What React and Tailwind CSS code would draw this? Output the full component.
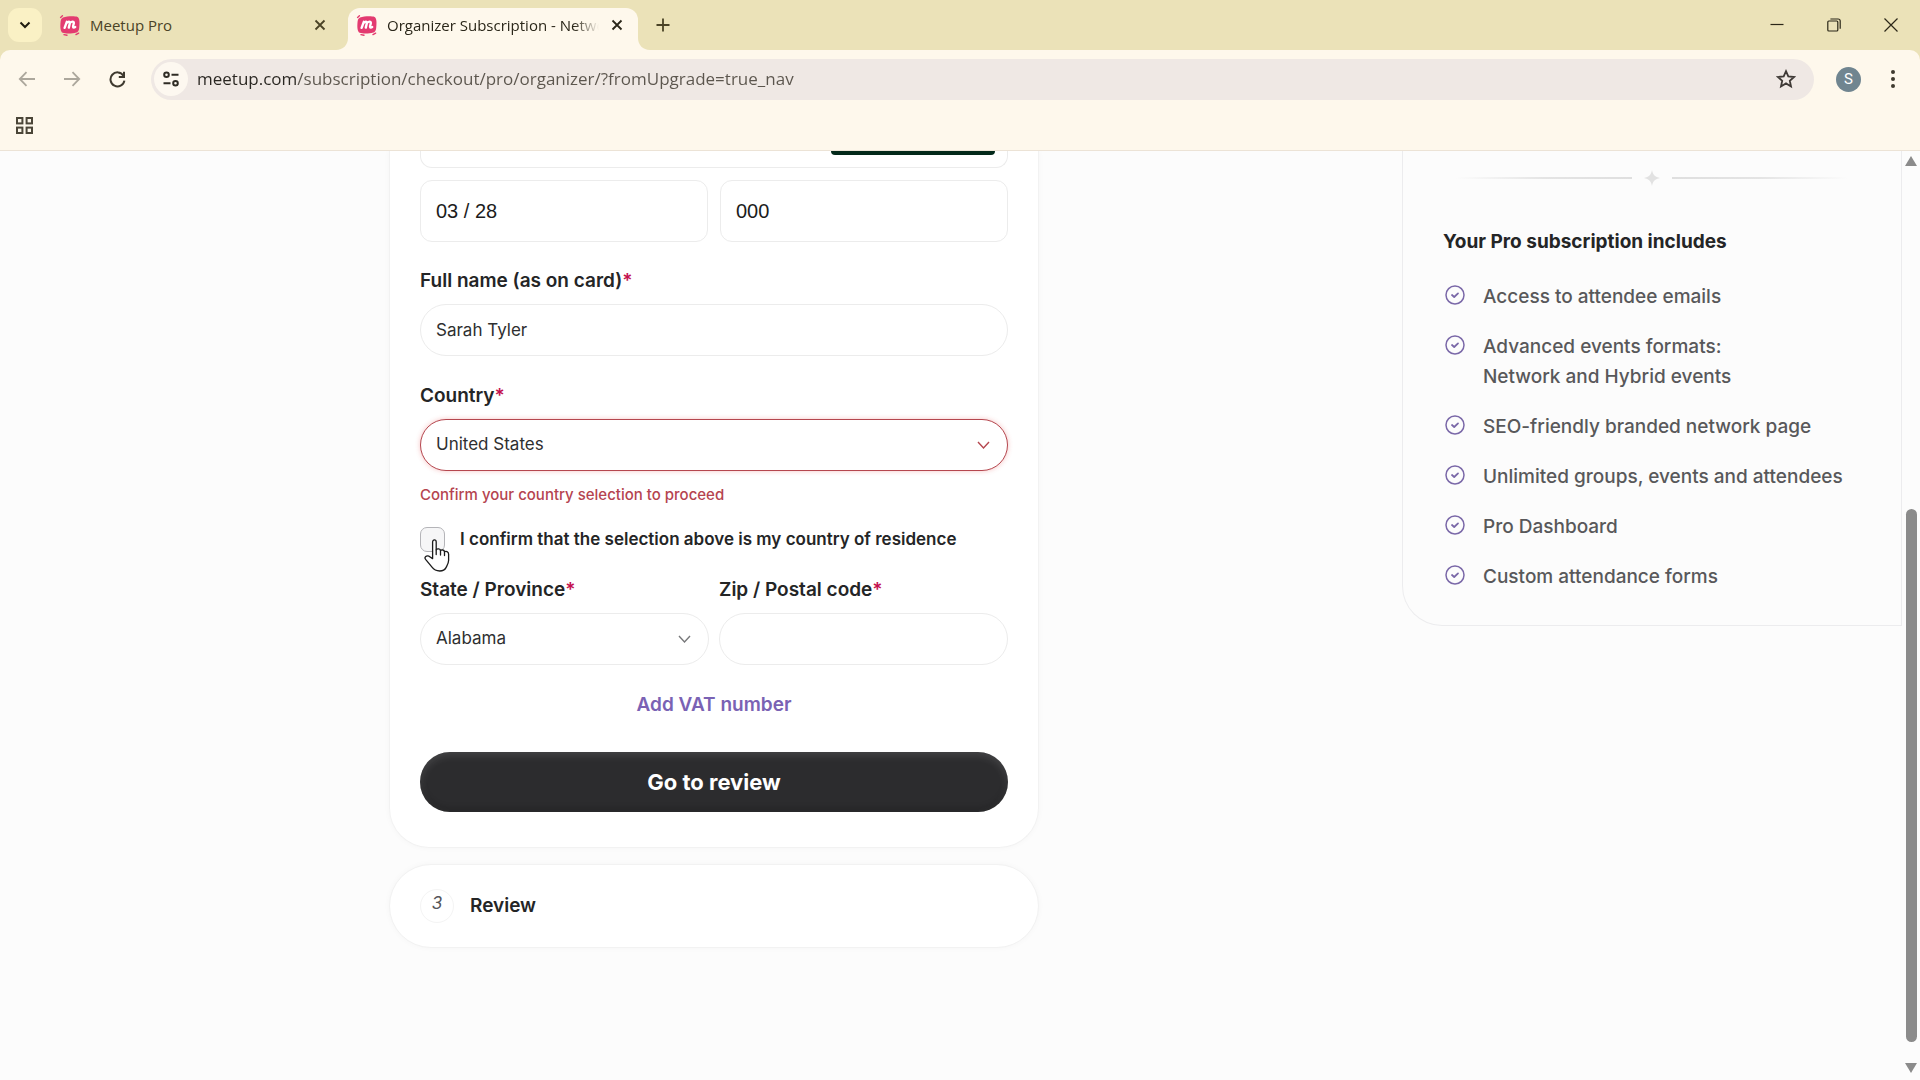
import React, { useState } from 'react';

const includes = [
  ['Access to attendee emails'],
  ['Advanced events formats:', 'Network and Hybrid events'],
  ['SEO-friendly branded network page'],
  ['Unlimited groups, events and attendees'],
  ['Pro Dashboard'],
  ['Custom attendance forms'],
];

const fieldClass =
  'w-full h-[52px] rounded-full border bg-white px-[15px] text-[17px] text-[#2e2f30] outline-none appearance-none';

function Favicon() {
  return (
    <svg width="22" height="22" viewBox="0 0 22 22" className="shrink-0">
      <path
        d="M4 3.4C8 2.4 15 1.8 18.6 3C20.4 4 20.8 8 20.4 11C20.2 15 20 17.6 17.4 18.6C13 19.8 7 20 3.6 18.8C1.4 17.6 1.2 13 1.4 10C1.6 6.6 1.8 4.2 4 3.4Z"
        fill="#e33b70"
      />
      <path d="M1.6 3.4L3.4 1.8M17 20.6L19.6 19.2M5 20.6L8 21.2" stroke="#e33b70" strokeWidth="1.4" strokeLinecap="round" />
      <path
        d="M5.6 13.8L7.8 7.8M7.2 9.6C8.8 7 11.4 7 10.8 9.4L9.8 13.6M10.6 9.6C12.2 7 15.2 7 14.8 9.4C14.4 11 13.4 13.4 14.8 13.6C15.4 13.6 15.8 13.4 16.2 13"
        stroke="#fff"
        strokeWidth="2.4"
        strokeLinecap="round"
        strokeLinejoin="round"
        fill="none"
      />
    </svg>
  );
}

function CloseIcon() {
  return (
    <svg width="12" height="12" viewBox="0 0 12 12" fill="none" stroke="currentColor" strokeWidth="1.8">
      <path d="M1.5 1.5L10.5 10.5M10.5 1.5L1.5 10.5" />
    </svg>
  );
}

function TabStrip() {
  return (
    <div className="flex h-[50px] items-end bg-[#ebe2b8] text-[15px] text-[#4a4326]">
      <button aria-label="Search tabs" className="mb-2 ml-2 flex h-[34px] w-[34px] items-center justify-center rounded-[11px] bg-[#faf1c5] text-[#1f1c10]">
        <svg width="12" height="8" viewBox="0 0 12 8" fill="none" stroke="currentColor" strokeWidth="2">
          <path d="M1.5 1.5L6 6L10.5 1.5" />
        </svg>
      </button>
      <div className="flex h-[50px] w-[306px] items-center pr-[22px] pl-[17px]">
        <Favicon />
        <span className="ml-[9px] flex-1">Meetup Pro</span>
        <button aria-label="Close tab"><CloseIcon /></button>
      </div>
      <div className="relative flex h-[42px] w-[290px] items-center rounded-t-[12px] bg-[#fef8ec] pr-[15px] pb-2 pl-2 text-[#2a2619]">
        <svg className="absolute bottom-0 -left-3" width="12" height="12" viewBox="0 0 12 12" fill="#fef8ec">
          <path d="M12 0V12H0C7 12 12 7 12 0Z" />
        </svg>
        <svg className="absolute -right-3 bottom-0" width="12" height="12" viewBox="0 0 12 12" fill="#fef8ec">
          <path d="M0 0V12H12C5 12 0 7 0 0Z" />
        </svg>
        <Favicon />
        <span className="mr-3 ml-[9px] flex-1 overflow-hidden whitespace-nowrap [mask-image:linear-gradient(to_right,black_88%,transparent)]">
          Organizer Subscription - Network
        </span>
        <button aria-label="Close tab"><CloseIcon /></button>
      </div>
      <button aria-label="New tab" className="mb-[18px] ml-[18px] text-[#4a4326]">
        <svg width="14" height="14" viewBox="0 0 14 14" fill="none" stroke="currentColor" strokeWidth="1.8">
          <path d="M7 0.5V13.5M0.5 7H13.5" />
        </svg>
      </button>
      <div className="mr-[22px] mb-[18px] ml-auto flex items-center gap-[43px] text-[#2b2718]">
        <button aria-label="Minimize">
          <svg width="14" height="14" viewBox="0 0 14 14" stroke="currentColor" strokeWidth="1.2">
            <path d="M0.5 6.5H13.5" />
          </svg>
        </button>
        <button aria-label="Restore">
          <svg width="14" height="14" viewBox="0 0 14 14" fill="none" stroke="currentColor" strokeWidth="1.2">
            <rect x="0.8" y="3" width="10" height="10" rx="1" />
            <path d="M3.4 1H11C12.4 1 13.2 1.8 13.2 3V10.8" />
          </svg>
        </button>
        <button aria-label="Close">
          <svg width="14" height="14" viewBox="0 0 14 14" fill="none" stroke="currentColor" strokeWidth="1.2">
            <path d="M0.5 0.5L13.5 13.5M13.5 0.5L0.5 13.5" />
          </svg>
        </button>
      </div>
    </div>
  );
}

function Toolbar() {
  const [url, setUrl] = useState('meetup.com/subscription/checkout/pro/organizer/?fromUpgrade=true_nav');

  return (
    <div className="bg-[#ebe2b8]">
      <div className="rounded-t-[10px] border-b border-[#ece3d6] bg-[#fef8ec]">
        <div className="flex h-[58px] items-center pr-[21px] pl-[18px]">
          <button aria-label="Back" className="text-[#aca79c]">
            <svg width="18" height="16" viewBox="0 0 18 16" fill="none" stroke="currentColor" strokeWidth="1.8">
              <path d="M17 8H2M8.5 1.2L1.8 8L8.5 14.8" />
            </svg>
          </button>
          <button aria-label="Forward" className="ml-[27px] text-[#aca79c]">
            <svg width="18" height="16" viewBox="0 0 18 16" fill="none" stroke="currentColor" strokeWidth="1.8">
              <path d="M1 8H16M9.5 1.2L16.2 8L9.5 14.8" />
            </svg>
          </button>
          <button aria-label="Reload" className="ml-[28px] text-[#3f3a2f]">
            <svg width="17" height="17" viewBox="0 0 17 17" fill="none" stroke="currentColor" strokeWidth="2">
              <path d="M14.4 4.6A7 7 0 1 0 15.4 9.6" />
              <path d="M15 0.8V6H9.8" />
            </svg>
          </button>
          <div className="ml-[25px] flex h-[41px] flex-1 items-center rounded-full bg-[#efe8e4] pr-[18px] pl-[3px]">
            <button aria-label="Site information" className="flex h-[34px] w-[34px] items-center justify-center rounded-full bg-[#fdf8f0] text-[#2f2b24]">
              <svg width="18" height="16" viewBox="0 0 18 16" fill="none" stroke="currentColor" strokeWidth="2">
                <circle cx="4.5" cy="3.8" r="2.3" />
                <path d="M9.5 3.8H16.5M1.5 12.2H8.5" />
                <circle cx="13.5" cy="12.2" r="2.3" />
              </svg>
            </button>
            {/* The host part of the address is darker than its path */}
            <input
              aria-label="Address"
              value={url}
              onChange={(e) => setUrl(e.target.value)}
              className="ml-[9px] flex-1 bg-[linear-gradient(to_right,#292621_100px,#5b554d_100px)] bg-clip-text text-[17px] text-transparent outline-none"
            />
            <button aria-label="Bookmark this tab" className="text-[#3f3a36]">
              <svg width="20" height="20" viewBox="0 0 20 20" fill="none" stroke="currentColor" strokeWidth="1.8">
                <path d="M10 2.2L12.3 7.4L18 8L13.8 11.8L15 17.4L10 14.4L5 17.4L6.2 11.8L2 8L7.7 7.4Z" />
              </svg>
            </button>
          </div>
          <button aria-label="Profile" className="ml-[22px] flex h-[25px] w-[25px] items-center justify-center rounded-full bg-[#708590] font-['Roboto',sans-serif] text-[15px] text-white">
            S
          </button>
          <button aria-label="Menu" className="ml-[26px] text-[#3f3a2f]">
            <svg width="12" height="20" viewBox="0 0 12 20" fill="currentColor">
              <circle cx="6" cy="3" r="2" />
              <circle cx="6" cy="10" r="2" />
              <circle cx="6" cy="17" r="2" />
            </svg>
          </button>
        </div>
        <div className="flex h-[42px] items-start pt-2 pl-[15px]">
          <button aria-label="Apps" className="text-[#4b4638]">
            <svg width="19" height="19" viewBox="0 0 19 19" fill="none" stroke="currentColor" strokeWidth="2">
              <rect x="2" y="2" width="5.4" height="5.4" />
              <rect x="11.6" y="2" width="5.4" height="5.4" />
              <rect x="2" y="11.6" width="5.4" height="5.4" />
              <rect x="11.6" y="11.6" width="5.4" height="5.4" />
            </svg>
          </button>
        </div>
      </div>
    </div>
  );
}

function Label({ htmlFor, children }) {
  return (
    <label htmlFor={htmlFor} className="mb-[11px] block text-[19px] leading-6 font-semibold text-[#242526]">
      {children}
      <span className="text-[#c4114f]">*</span>
    </label>
  );
}

function Chevron({ className }) {
  return (
    <svg className={`pointer-events-none absolute top-[22px] right-[18px] ${className}`} width="13" height="9" viewBox="0 0 13 9" fill="none" stroke="currentColor" strokeWidth="1.4">
      <path d="M1 1L6.5 7L12 1" />
    </svg>
  );
}

function HandCursor() {
  return (
    <svg className="pointer-events-none absolute top-3 left-1 z-10" width="26" height="33" viewBox="0 0 26 33" fill="#fff" stroke="#1b1b1b" strokeWidth="1.3" strokeLinejoin="round" strokeLinecap="round">
      <path d="M8.6 18.6V3C8.6 0.2 12.2 0.2 12.2 3V10.8C13 9.4 16.4 9.6 16.5 11.6C17.4 10.4 20.4 10.8 20.5 12.8C21.8 11.8 24.6 12.4 24.6 15V21.6C24.6 24.4 23 26.6 22 28.6C20.8 31 19 32 15.8 32C12.4 32 10 31 8 28.2L1.6 20.4C-0.2 18 2.6 16 5 17.2L8.6 19.6Z" />
      <path d="M12.2 10.8V15.6M16.5 11.6V16M20.5 12.8V16.6" fill="none" />
    </svg>
  );
}

function PaymentForm() {
  const [name, setName] = useState('Sarah Tyler');
  const [expiry, setExpiry] = useState('03 / 28');
  const [cvc, setCvc] = useState('000');
  const [zip, setZip] = useState('');
  const [confirmed, setConfirmed] = useState(false);

  const cardFieldClass =
    "h-[62px] w-full min-w-0 rounded-[12px] border border-[#ececec] bg-white px-[15px] font-['Liberation_Sans',sans-serif] text-[20px] text-[#1c1c1c] outline-none";

  return (
    <form
      onSubmit={(e) => e.preventDefault()}
      className="rounded-b-[40px] border border-t-0 border-[#f2f2f2] bg-white px-[30px] pb-[35px] shadow-[0_0_6px_rgba(0,0,0,0.03)]"
    >
      {/* Bottom of the card number field */}
      <div className="flex h-[17px] items-start justify-end rounded-b-[12px] border border-t-0 border-[#ececec] pr-3">
        <div className="h-1 w-[164px] rounded-b-[5px] bg-[#03291a]" />
      </div>

      <div className="mt-3 grid grid-cols-2 gap-3">
        <input aria-label="Expiration date" value={expiry} onChange={(e) => setExpiry(e.target.value)} className={cardFieldClass} />
        <input aria-label="Security code" value={cvc} onChange={(e) => setCvc(e.target.value)} className={cardFieldClass} />
      </div>

      <div className="mt-[27px]">
        <Label htmlFor="name">Full name (as on card)</Label>
        <input id="name" value={name} onChange={(e) => setName(e.target.value)} className={`${fieldClass} border-[#ececec]`} />
      </div>

      <div className="mt-7">
        <Label htmlFor="country">Country</Label>
        <div className="relative">
          <select id="country" className={`${fieldClass} border-[#b5474f] shadow-[0_0_5px_rgba(225,60,60,0.3)]`}>
            <option>United States</option>
          </select>
          <Chevron className="text-[#b5474f]" />
        </div>
        <p className="mt-[14px] text-[15px] leading-5 font-medium text-[#b54450]">Confirm your country selection to proceed</p>
      </div>

      <div className="relative mt-[22px] flex h-[25px] items-center">
        <input
          id="confirm"
          type="checkbox"
          checked={confirmed}
          onChange={(e) => setConfirmed(e.target.checked)}
          className="h-[25px] w-[25px] appearance-none rounded-[7px] border border-[#b4b4b8] bg-[#f6f6f7] checked:bg-[#2c2d2e]"
        />
        <label htmlFor="confirm" className="ml-[15px] text-[17px] font-semibold text-[#242526]">
          I confirm that the selection above is my country of residence
        </label>
        <HandCursor />
      </div>

      <div className="mt-[26px] grid grid-cols-2 gap-[10px]">
        <div>
          <Label htmlFor="state">State / Province</Label>
          <div className="relative">
            <select id="state" className={`${fieldClass} border-[#ececec]`}>
              <option>Alabama</option>
            </select>
            <Chevron className="text-[#77787a]" />
          </div>
        </div>
        <div>
          <Label htmlFor="zip">Zip / Postal code</Label>
          <input id="zip" value={zip} onChange={(e) => setZip(e.target.value)} className={`${fieldClass} border-[#ececec]`} />
        </div>
      </div>

      <button type="button" className="mx-auto mt-7 block text-[19px] leading-6 font-semibold text-[#7a62b4]">
        Add VAT number
      </button>

      <button
        type="submit"
        className="mt-[35px] h-[60px] w-full rounded-full bg-[#2c2c2e] text-[22px] font-bold text-white shadow-[inset_0_3px_8px_rgba(255,255,255,0.14),inset_0_-3px_6px_rgba(0,0,0,0.25)]"
      >
        Go to review
      </button>
    </form>
  );
}

function ReviewStep() {
  return (
    <section className="mt-4 flex h-[84px] items-center rounded-full border border-[#f2f2f2] bg-white px-[30px] shadow-[0_0_6px_rgba(0,0,0,0.03)]">
      <span className="flex h-[34px] w-[34px] items-start justify-center rounded-full border border-[#f4f4f4] pt-[3px] text-[17px] leading-5 text-[#55565a] italic">
        3
      </span>
      <h2 className="ml-4 text-[19px] font-semibold text-[#242526]">Review</h2>
    </section>
  );
}

function Summary() {
  return (
    <aside className="w-[500px] shrink-0 self-start rounded-bl-[40px] border border-t-0 border-[#ececee] px-10 pb-[33px]">
      <div className="flex items-center gap-3 px-[13px] pt-[19px]">
        <div className="h-[2px] flex-1 bg-linear-to-l from-[#dfdfdf] via-[#e4e4e4] to-transparent" />
        <svg width="16" height="16" viewBox="0 0 16 16" fill="#e2e2e2">
          <path d="M8 0C9 5 11 7 16 8C11 9 9 11 8 16C7 11 5 9 0 8C5 7 7 5 8 0Z" />
        </svg>
        <div className="h-[2px] flex-1 bg-linear-to-r from-[#dfdfdf] via-[#e4e4e4] to-transparent" />
      </div>
      <h2 className="mt-[41px] text-[19px] leading-[30px] font-bold text-[#242526]">Your Pro subscription includes</h2>
      <ul className="mt-[25px] flex flex-col gap-5">
        {includes.map((lines) => (
          <li key={lines[0]} className="flex gap-[18px] text-[19px] leading-[30px] font-medium text-[#58585a]">
            <svg className="mt-[3px] ml-[2px] shrink-0" width="20" height="20" viewBox="0 0 20 20" fill="none" stroke="#7a68a8" strokeWidth="1.5" strokeLinecap="round" strokeLinejoin="round">
              <circle cx="10" cy="10" r="9" />
              <path d="M7 10L9.2 12L13 8.4" strokeWidth="1.8" />
            </svg>
            <div>
              {lines.map((line) => (
                <p key={line}>{line}</p>
              ))}
            </div>
          </li>
        ))}
      </ul>
    </aside>
  );
}

function Scrollbar() {
  return (
    <div className="flex w-[18px] shrink-0 flex-col items-center bg-[#fcfcfc] pt-[5px] pb-[7px]">
      <svg width="12" height="10" viewBox="0 0 12 10" fill="#8b8b8b">
        <path d="M6 0L12 10H0Z" />
      </svg>
      <div className="flex w-full flex-1 flex-col items-center pt-[343px] pb-[21px]">
        <div className="w-[11px] flex-1 rounded-full bg-[#8b8b8b]" />
      </div>
      <svg width="12" height="10" viewBox="0 0 12 10" fill="#8b8b8b">
        <path d="M0 0H12L6 10Z" />
      </svg>
    </div>
  );
}

export default function App() {
  return (
    <div className="flex h-screen flex-col overflow-hidden bg-[#fcfcfc]">
      <header className="shrink-0 font-['Open_Sans',sans-serif]">
        <TabStrip />
        <Toolbar />
      </header>
      <div className="flex min-h-0 flex-1">
        <main className="flex flex-1 overflow-hidden font-['Inter',sans-serif]">
          <div className="flex flex-1 justify-center pl-[26px]">
            <div className="w-[650px]">
              <PaymentForm />
              <ReviewStep />
            </div>
          </div>
          <Summary />
        </main>
        <Scrollbar />
      </div>
    </div>
  );
}
